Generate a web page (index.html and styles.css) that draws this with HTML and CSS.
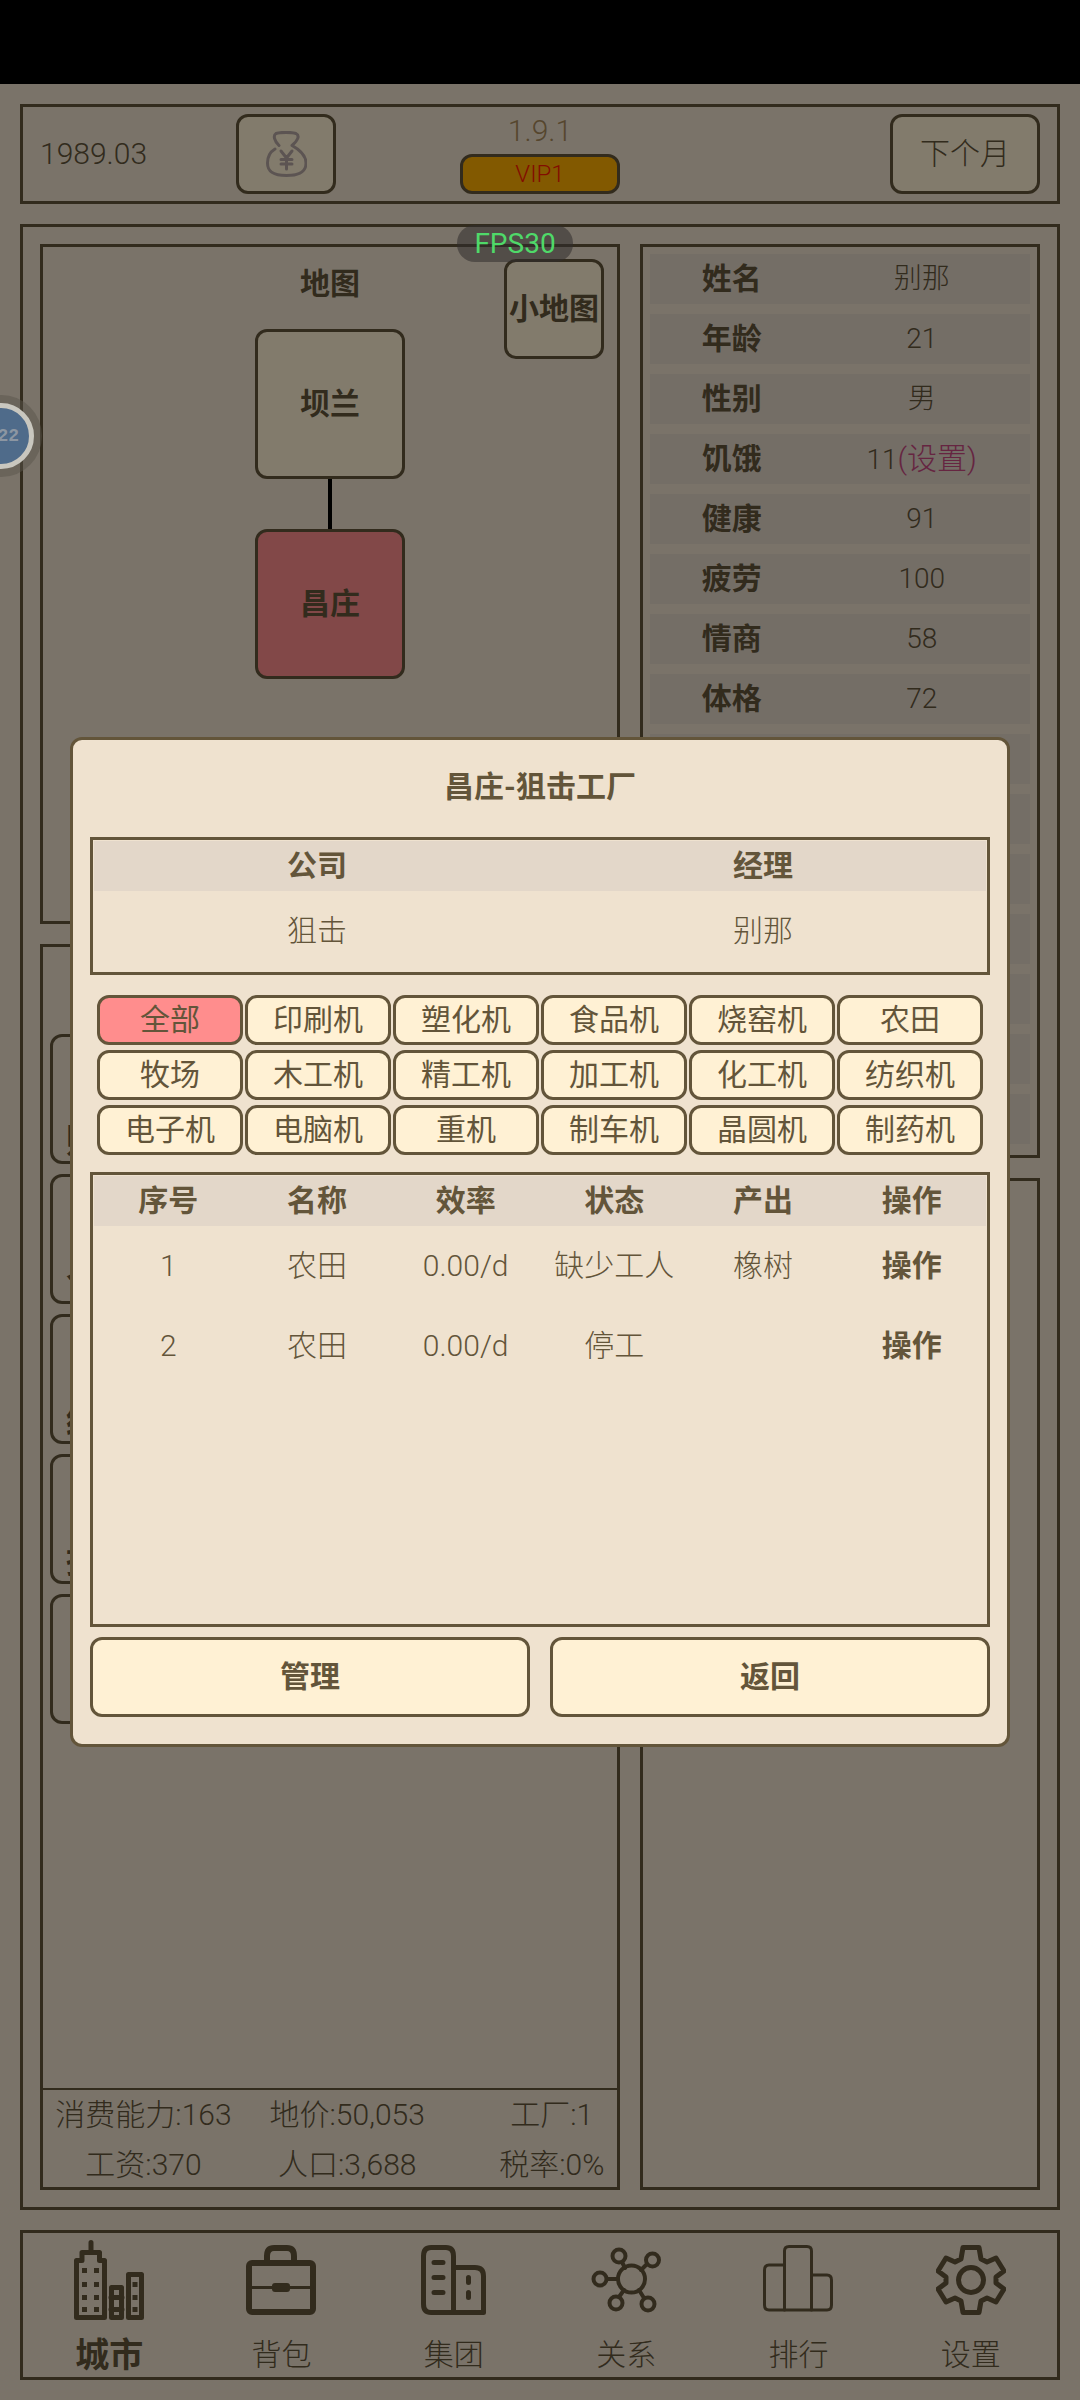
FILE: index.html
```html
<!DOCTYPE html>
<html lang="zh-CN">
<head>
  <meta charset="UTF-8">
  <meta name="viewport" content="width=device-width, initial-scale=1.0">
  <title>昌庄</title>
  <link rel="stylesheet" href="styles.css">
</head>
<body>
<div class="status-bar"></div>

<div class="page">
  <header class="top box">
    <span class="date">1989.03</span>
    <button class="btn money" aria-label="资金">
      <svg width="41" height="46" viewBox="0 0 41 46">
        <path d="M13 14.500C8 9.500 7 4.500 10 2.500C14 1 26 1 30 2.500C34 4.500 32 9.500 26 14.500C36 20 40 25 40 32C40 40 35 44.500 20.500 44.500S1.500 40 1.500 32C1.500 26 4 21 9 18"/>
        <path d="M15 20L20.500 27L26 20M20.500 27V38M15 28.500H26M15 33H26"/>
      </svg>
    </button>
    <div class="version">
      <span>1.9.1</span>
      <button class="btn vip">VIP1</button>
    </div>
    <button class="btn next">下个月</button>
  </header>

  <main class="main box">
    <div class="col">
      <section class="map box">
        <h2>地图</h2>
        <button class="btn mini-map">小地图</button>
        <button class="btn node">坝兰</button>
        <div class="road"></div>
        <button class="btn node current">昌庄</button>
      </section>
      <section class="city box">
        <div class="places">
          <button class="place">财政</button>
          <button class="place">仓库</button>
          <button class="place">经营</button>
          <button class="place">招聘</button>
          <button class="place"></button>
        </div>
        <div class="city-info">
          <span>消费能力:163</span><span>地价:50,053</span><span>工厂:1</span>
          <span>工资:370</span><span>人口:3,688</span><span>税率:0%</span>
        </div>
      </section>
    </div>

    <div class="col">
      <section class="person box">
        <table class="stats">
          <tr><th>姓名</th><td>别那</td></tr>
          <tr><th>年龄</th><td>21</td></tr>
          <tr><th>性别</th><td>男</td></tr>
          <tr><th>饥饿</th><td>11<a href="#">(设置)</a></td></tr>
          <tr><th>健康</th><td>91</td></tr>
          <tr><th>疲劳</th><td>100</td></tr>
          <tr><th>情商</th><td>58</td></tr>
          <tr><th>体格</th><td>72</td></tr>
          <tr><th></th><td></td></tr>
          <tr><th></th><td></td></tr>
          <tr><th></th><td></td></tr>
          <tr><th></th><td></td></tr>
          <tr><th></th><td></td></tr>
          <tr><th></th><td></td></tr>
          <tr><th></th><td></td></tr>
        </table>
      </section>
      <section class="log box"></section>
    </div>
  </main>

  <nav class="nav box">
    <a href="#" class="active">
      <svg width="70" height="80" viewBox="0 0 70 80" stroke-width="5">
        <path d="M17 2.500V12M2.500 77.500V20.500H8V12.500H25.500V20.500H30.500V77.500ZM37.500 77.500V47.500H47.500V77.500ZM54.500 77.500V34.500H67.500V77.500Z"/>
        <path d="M37 57.500H48M37 69.500H48" />
        <path class="fill" d="M8 28h5v5h-5zM20 28h5v5h-5zM8 42h5v5h-5zM20 42h5v5h-5zM8 55h5v5h-5zM20 55h5v5h-5zM8 67h5v5h-5zM20 67h5v5h-5zM58.500 42h5v5h-5zM58.500 55h5v5h-5zM58.500 67h5v5h-5z"/>
      </svg>
      <span>城市</span>
    </a>
    <a href="#">
      <svg width="70" height="80" viewBox="0 -5 70 80" stroke-width="6">
        <rect x="3" y="18" width="64" height="49" rx="3"/>
        <path d="M21 17V11Q21 3 28 3H41Q48 3 48 11V17"/>
        <path d="M4 42.500H66" stroke-width="3"/>
        <rect class="fill" x="26" y="38" width="18" height="9" rx="3"/>
      </svg>
      <span>背包</span>
    </a>
    <a href="#">
      <svg width="70" height="80" viewBox="0 -5 70 80" stroke-width="5">
        <path d="M4.500 11Q4.500 2.500 12 2.500H27Q34.500 2.500 34.500 11V67.500H12Q4.500 67.500 4.500 59ZM34.500 22.500H56Q64.500 22.500 64.500 31V67.500H34.500"/>
        <path d="M15 17.500H24M15 32.500H24M15 47.500H24M49.500 32.500V37.500M49.500 47.500V52.500"/>
      </svg>
      <span>集团</span>
    </a>
    <a href="#">
      <svg width="70" height="80" viewBox="0 -5 70 80" stroke-width="4">
        <path d="M31 17L34 23M55 20L50 25M16 34H27M28 52L33 45M53 53L48 45"/>
        <circle cx="40.500" cy="34" r="13.500"/>
        <circle cx="28" cy="11" r="6.500"/>
        <circle cx="61.500" cy="15" r="6.500"/>
        <circle cx="9" cy="34" r="6.500"/>
        <circle cx="25" cy="58" r="6.500"/>
        <circle cx="57" cy="59" r="6.500"/>
      </svg>
      <span>关系</span>
    </a>
    <a href="#">
      <svg width="70" height="80" viewBox="0 -5 70 80" stroke-width="3">
        <path d="M21.500 20H6Q1.500 20 1.500 25V60Q1.500 65 6 65H64Q68.500 65 68.500 60V35Q68.500 30 64 30H48.500"/>
        <path d="M21.500 65V6Q21.500 1.500 26 1.500H44Q48.500 1.500 48.500 6V65"/>
      </svg>
      <span>排行</span>
    </a>
    <a href="#">
      <svg width="70" height="80" viewBox="0 -5 70 80" stroke-width="5">
        <path d="M27 2.500H43L45 14L51 17L60 13L68 26L60 32V38L68 44L60 57L51 53L45 56L43 67.500H27L25 56L19 53L10 57L2 44L10 38V32L2 26L10 13L19 17L25 14Z"/>
        <circle cx="35" cy="35" r="12.500"/>
      </svg>
      <span>设置</span>
    </a>
  </nav>
</div>

<div class="overlay">
  <div class="dialog" role="dialog" aria-labelledby="dialog-title">
    <h1 id="dialog-title">昌庄-狙击工厂</h1>

    <div class="panel">
      <table>
        <tr><th>公司</th><th>经理</th></tr>
        <tr><td>狙击</td><td>别那</td></tr>
      </table>
    </div>

    <div class="filters">
      <button class="selected">全部</button>
      <button>印刷机</button>
      <button>塑化机</button>
      <button>食品机</button>
      <button>烧窑机</button>
      <button>农田</button>
      <button>牧场</button>
      <button>木工机</button>
      <button>精工机</button>
      <button>加工机</button>
      <button>化工机</button>
      <button>纺织机</button>
      <button>电子机</button>
      <button>电脑机</button>
      <button>重机</button>
      <button>制车机</button>
      <button>晶圆机</button>
      <button>制药机</button>
    </div>

    <div class="panel list">
      <table>
        <tr><th>序号</th><th>名称</th><th>效率</th><th>状态</th><th>产出</th><th>操作</th></tr>
        <tr><td>1</td><td>农田</td><td>0.00/d</td><td>缺少工人</td><td>橡树</td><td><a href="#">操作</a></td></tr>
        <tr><td>2</td><td>农田</td><td>0.00/d</td><td>停工</td><td></td><td><a href="#">操作</a></td></tr>
      </table>
    </div>

    <div class="actions">
      <button class="btn">管理</button>
      <button class="btn">返回</button>
    </div>
  </div>
</div>

<div class="fps">FPS30</div>
<div class="bubble">22</div>
</body>
</html>
```
FILE: styles.css
```css
* {
  box-sizing: border-box;
}
body {
  margin: 0;
  min-height: 100vh;
  position: relative;
  display: flex;
  flex-direction: column;
  background-color: #efe2cf;
  color: #63553a;
  font-family: Roboto, "Noto Sans CJK SC", sans-serif;
  font-size: 30px;
  font-weight: 300;
  line-height: 40px;
}
button {
  font: inherit;
  color: inherit;
  padding: 0;
  background: none;
}
a {
  color: inherit;
  text-decoration: none;
}
h1, h2 {
  margin: 0;
  font-size: 30px;
  font-weight: bold;
  text-align: center;
}
svg {
  display: block;
  fill: none;
  stroke: currentColor;
  stroke-linejoin: round;
}
.fill {
  fill: currentColor;
  stroke: none;
}
.status-bar {
  height: 84px;
  background-color: #000;
}
.page {
  flex: 1;
  display: flex;
  flex-direction: column;
  gap: 20px;
  padding: 20px;
}
.box {
  border: 3px solid #63553a;
}
.btn {
  border: 3px solid #63553a;
  border-radius: 12px;
  background-color: #fff1d4;
}

/* top bar */
.top {
  height: 100px;
  display: grid;
  grid-template-columns: 196px 100px 1fr 150px;
  align-items: center;
  padding: 0 17px;
}
.money {
  height: 80px;
  display: flex;
  align-items: center;
  justify-content: center;
  color: #b4a5a2;
}
.money svg {
  stroke-width: 3;
  stroke-linecap: round;
}
.version {
  width: 160px;
  height: 80px;
  margin-left: 124px;
  display: flex;
  flex-direction: column;
  justify-content: space-between;
  line-height: 34px;
  text-align: center;
  color: #a98a5a;
}
.vip {
  height: 40px;
  line-height: 34px;
  font-size: 24px;
  background-color: #ffae00;
  color: #ff1a00;
}
.next {
  height: 80px;
}

/* map, city and person */
.main {
  flex: 1;
  display: grid;
  grid-template-columns: 29fr 20fr;
  gap: 20px;
  padding: 17px;
}
.col {
  display: flex;
  flex-direction: column;
  gap: 20px;
}
.map {
  position: relative;
  height: 680px;
  padding-top: 17px;
  display: flex;
  flex-direction: column;
  align-items: center;
}
.map h2 {
  margin-bottom: 25px;
}
.mini-map {
  position: absolute;
  top: 12px;
  right: 13px;
  width: 100px;
  height: 100px;
  font-weight: bold;
}
.node {
  width: 150px;
  height: 150px;
  font-weight: bold;
}
.current {
  background-color: #ff8d8d;
}
.road {
  width: 4px;
  height: 50px;
  background-color: #000;
}
.city {
  flex: 1;
  display: flex;
  flex-direction: column;
  justify-content: space-between;
}
.places {
  display: flex;
  flex-direction: column;
  gap: 10px;
  padding: 87px 7px 0;
}
.place {
  width: 100px;
  height: 130px;
  padding-top: 84px;
  border: 3px solid #63553a;
  border-radius: 12px;
  font-size: 34px;
  font-weight: bold;
  line-height: 40px;
}
.city-info {
  height: 99px;
  display: grid;
  grid-template-columns: 35% 36% 1fr;
  border-top: 2px solid #63553a;
  line-height: 50px;
  text-align: center;
}
.city-info span:nth-child(3n) {
  padding-left: 36px;
}
.person {
  padding: 7px;
}
.stats {
  width: 100%;
  margin: -10px 0 -6px;
  border-spacing: 0 10px;
}
.stats th, .stats td {
  height: 50px;
  padding: 0;
  background-color: #e3d7c9;
  text-align: center;
}
.stats th {
  width: 43%;
}
.stats td {
  font-size: 28px;
}
.stats a {
  color: #c84a80;
  font-size: 30px;
}
.log {
  flex: 1;
}

/* bottom menu */
.nav {
  height: 150px;
  display: grid;
  grid-template-columns: repeat(6, 1fr);
  padding-top: 7px;
}
.nav a {
  display: flex;
  flex-direction: column;
  align-items: center;
  gap: 15px;
}
.nav svg {
  stroke-linecap: round;
}
.nav .active {
  font-size: 34px;
  font-weight: bold;
}

/* dialog */
.overlay {
  position: absolute;
  inset: 0;
  padding: 84px 70px 0;
  display: flex;
  align-items: center;
  background-color: rgba(0, 0, 0, 0.49);
}
.dialog {
  flex: 1;
  padding: 27px 17px;
  border: 3px solid #63553a;
  border-radius: 12px;
  background-color: #efe2cf;
}
.dialog h1 {
  margin-bottom: 30px;
}
.panel {
  border: 3px solid #63553a;
  padding: 1px;
}
.panel table {
  width: 100%;
  table-layout: fixed;
  border-collapse: collapse;
  text-align: center;
}
.panel th {
  height: 50px;
  padding: 0;
  background-color: #e3d7c9;
}
.panel td {
  height: 80px;
  padding: 0;
}
.panel a {
  font-weight: bold;
}
.list {
  min-height: 455px;
}
.filters {
  display: grid;
  grid-template-columns: repeat(6, 1fr);
  gap: 5px 2px;
  padding: 20px 7px 17px;
}
.filters button {
  height: 50px;
  border: 3px solid #63553a;
  border-radius: 12px;
  background-color: #fff1d4;
  font-weight: 400;
}
.filters .selected {
  background-color: #ff8d8d;
}
.actions {
  display: grid;
  grid-template-columns: 1fr 1fr;
  gap: 20px;
  margin-top: 10px;
}
.actions .btn {
  height: 80px;
  font-weight: bold;
}

/* floating widgets */
.fps {
  position: absolute;
  top: 225px;
  left: 50%;
  width: 116px;
  margin-left: -83px;
  border-radius: 18px;
  background-color: rgba(50, 45, 45, 0.55);
  color: #4fd969;
  font-size: 28px;
  font-weight: 400;
  line-height: 37px;
  text-align: center;
}
.bubble {
  position: absolute;
  top: 403px;
  left: -32px;
  width: 66px;
  height: 66px;
  padding-right: 10px;
  border: 5px solid #c9c7bf;
  border-radius: 50%;
  background-color: #4f6b8a;
  box-shadow: 0 0 0 8px rgba(90, 86, 76, 0.5);
  color: #8c96a2;
  font-family: "Liberation Mono", monospace;
  font-size: 18px;
  font-weight: bold;
  line-height: 56px;
  text-align: right;
}
```
